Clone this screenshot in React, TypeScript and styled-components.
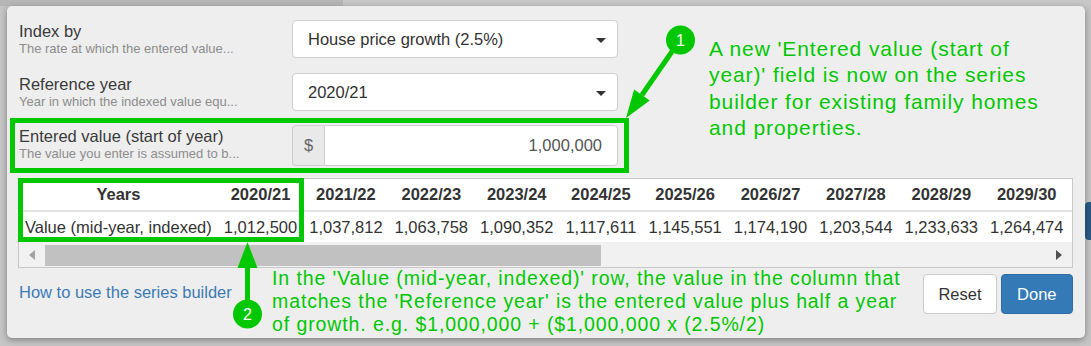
import React from "react";
import styled, { createGlobalStyle } from "styled-components";

const GlobalStyle = createGlobalStyle`
  html, body {
    margin: 0;
    padding: 0;
    width: 1091px;
    height: 346px;
    overflow: hidden;
    background: #c5c5c5;
    font-family: "Liberation Sans", Arial, sans-serif;
  }
`;

const GREEN = "#00c800";

const Page = styled.div`
  position: relative;
  width: 1091px;
  height: 346px;
  overflow: hidden;
  background: #c5c5c5;
`;

const PageTopBar = styled.div`
  display: flex;
  height: 6px;
`;

const TopSegment = styled.div<{ $w: number; $c: string }>`
  width: ${(p) => p.$w}px;
  flex: ${(p) => (p.$w ? "none" : "1")};
  background: ${(p) => p.$c};
`;

const PageBehind = styled.div`
  display: flex;
  flex-direction: column;
  align-items: flex-end;
  padding-top: 196px;
`;

const GhostButton = styled.div`
  width: 6px;
  height: 38px;
  background: #2a5985;
  border-radius: 4px 0 0 4px;
`;

const Modal = styled.div`
  position: absolute;
  left: 7px;
  top: 6px;
  width: 1078px;
  height: 332px;
  box-sizing: border-box;
  padding: 14px 12px 0 11px;
  background: #eeeeee;
  border-radius: 5px;
  box-shadow: 0 2px 6px rgba(0, 0, 0, 0.35);
  color: #333;
`;

const Form = styled.div`
  display: grid;
  grid-template-columns: 261px 326px;
  column-gap: 12px;
  margin-left: 1px;
`;

const FieldRow = styled.div<{ $gap: number }>`
  display: contents;
  & > * {
    margin-bottom: ${(p) => p.$gap}px;
  }
`;

const LabelBlock = styled.div`
  padding-top: 1px;
  white-space: nowrap;
`;

const Label = styled.div`
  font-size: 16.5px;
  line-height: 20px;
  color: #3a3a3a;
`;

const Hint = styled.div`
  font-size: 13px;
  line-height: 16px;
  color: #8c8c8c;
`;

const Select = styled.div`
  box-sizing: border-box;
  height: 38px;
  display: flex;
  align-items: center;
  justify-content: space-between;
  padding: 0 11px 0 15px;
  background: #fff;
  border: 1px solid #cfcfcf;
  border-radius: 4px;
  font-size: 16.5px;
  color: #333;
`;

const Caret = styled.span`
  width: 0;
  height: 0;
  border-top: 5px solid #333;
  border-left: 5px solid transparent;
  border-right: 5px solid transparent;
  margin-top: 2px;
`;

const InputGroup = styled.div`
  display: flex;
  height: 41px;
  box-sizing: border-box;
`;

const Addon = styled.div`
  width: 32px;
  box-sizing: border-box;
  display: flex;
  align-items: center;
  justify-content: center;
  background: #e9e9e9;
  border: 1px solid #cfcfcf;
  border-right: none;
  border-radius: 4px 0 0 4px;
  font-size: 16.5px;
  color: #666;
`;

const Input = styled.div`
  flex: 1;
  display: flex;
  align-items: center;
  justify-content: flex-end;
  padding-right: 15px;
  background: #fff;
  border: 1px solid #cfcfcf;
  border-radius: 0 4px 4px 0;
  font-size: 16.5px;
  color: #555;
`;

const TableBox = styled.div`
  margin-top: -3px;
  border: 1px solid #c8c8c8;
  background: #f1f1f1;
  overflow: hidden;
`;

const Table = styled.table`
  border-collapse: collapse;
  background: #fff;
  white-space: nowrap;
  font-size: 16.5px;
  line-height: 20px;
  color: #333;
`;

const Th = styled.th`
  padding: 5px 6px 6px;
  text-align: center;
  font-weight: bold;
  border-bottom: 2px solid #e2e2e2;
`;

const Td = styled.td`
  padding: 5px 6px;
  text-align: center;
`;

const ScrollTrack = styled.div`
  display: flex;
  align-items: center;
  height: 25px;
  background: #f1f1f1;
`;

const ScrollArrow = styled.div<{ $dir: "left" | "right"; $active?: boolean }>`
  width: 26px;
  display: flex;
  justify-content: center;
  &::before {
    content: "";
    width: 0;
    height: 0;
    border-top: 5px solid transparent;
    border-bottom: 5px solid transparent;
    ${(p) =>
      p.$dir === "left"
        ? `border-right: 6px solid ${p.$active ? "#505050" : "#a3a3a3"};`
        : `border-left: 6px solid ${p.$active ? "#505050" : "#a3a3a3"};`}
  }
`;

const ScrollThumbArea = styled.div`
  flex: 1;
  height: 21px;
  margin-top: 3px;
  align-self: flex-start;
`;

const ScrollThumb = styled.div`
  height: 100%;
  background: #c1c1c1;
`;

const Footer = styled.div`
  display: flex;
  justify-content: space-between;
  align-items: flex-start;
  margin-top: 6px;
  margin-left: 1px;
`;

const HelpLink = styled.a`
  margin-top: 8px;
  font-size: 16.5px;
  line-height: 20px;
  color: #3d7ab6;
  text-decoration: none;
`;

const Buttons = styled.div`
  display: flex;
  gap: 4px;
`;

const Button = styled.button<{ $primary?: boolean }>`
  height: 40px;
  box-sizing: border-box;
  padding: 0 ${(p) => (p.$primary ? "15.5px" : "14px")};
  font-family: inherit;
  font-size: 16.5px;
  border-radius: 4px;
  border: 1px solid ${(p) => (p.$primary ? "#2e6da4" : "#cccccc")};
  background: ${(p) => (p.$primary ? "#337ab7" : "#ffffff")};
  color: ${(p) => (p.$primary ? "#ffffff" : "#333333")};
`;

const Overlay = styled.svg`
  position: absolute;
  left: 0;
  top: 0;
  pointer-events: none;
`;

const Note = styled.div<{ $x: number; $y: number; $size: number; $lh: number; $ls: number }>`
  position: absolute;
  left: ${(p) => p.$x}px;
  top: ${(p) => p.$y}px;
  font-size: ${(p) => p.$size}px;
  line-height: ${(p) => p.$lh}px;
  letter-spacing: ${(p) => p.$ls}px;
  color: ${GREEN};
  white-space: nowrap;
`;

const known = [
  1012500, 1037812, 1063758, 1090352, 1117611, 1145551, 1174190, 1203544,
  1233633, 1264474,
];

const years = Array.from({ length: 11 }, (_, i) => {
  const y = 2020 + i;
  return `${y}/${String((y + 1) % 100).padStart(2, "0")}`;
});

const values = years.map((_, i) =>
  (known[i] ?? Math.round(1012500 * Math.pow(1.025, i))).toLocaleString("en-US")
);

function Field(props: { label: string; hint: string; gap: number; children: React.ReactNode }) {
  return (
    <FieldRow $gap={props.gap}>
      <LabelBlock>
        <Label>{props.label}</Label>
        <Hint>{props.hint}</Hint>
      </LabelBlock>
      {props.children}
    </FieldRow>
  );
}

function Annotations() {
  // arrow 1 runs from the badge down-left to the highlight's corner
  const tip1 = { x: 626, y: 118 };
  const ux = -0.569;
  const uy = 0.822;
  const base1 = { x: tip1.x - ux * 28, y: tip1.y - uy * 28 };
  const px = 0.822;
  const py = 0.569;
  return (
    <Overlay width={1091} height={346} viewBox="0 0 1091 346">
      <rect x={12.5} y={120.5} width={614} height={50} fill="none" stroke={GREEN} strokeWidth={5} />
      <rect x={20.5} y={180.5} width={281} height={59} fill="none" stroke={GREEN} strokeWidth={5} />
      <line x1={680} y1={40} x2={base1.x} y2={base1.y} stroke={GREEN} strokeWidth={5} />
      <polygon
        points={`${tip1.x},${tip1.y} ${base1.x + px * 9.5},${base1.y + py * 9.5} ${base1.x - px * 9.5},${base1.y - py * 9.5}`}
        fill={GREEN}
      />
      <circle cx={680.5} cy={40} r={14.5} fill={GREEN} />
      <text x={680.5} y={46} textAnchor="middle" fontSize={16} fill="#fff" fontFamily="Liberation Sans, Arial, sans-serif">
        1
      </text>
      <line x1={247.5} y1={266} x2={247.5} y2={305} stroke={GREEN} strokeWidth={5} />
      <polygon points="247.5,242 237.5,268 257.5,268" fill={GREEN} />
      <circle cx={247.5} cy={314} r={14.5} fill={GREEN} />
      <text x={247.5} y={320} textAnchor="middle" fontSize={16} fill="#fff" fontFamily="Liberation Sans, Arial, sans-serif">
        2
      </text>
    </Overlay>
  );
}

export default function App() {
  return (
    <Page>
      <GlobalStyle />
      <PageTopBar>
        <TopSegment $w={343} $c="#b6b6b6" />
        <TopSegment $w={0} $c="#c7c7c7" />
      </PageTopBar>
      <PageBehind>
        <GhostButton />
      </PageBehind>

      <Modal>
        <Form>
          <Field label="Index by" hint="The rate at which the entered value..." gap={15}>
            <Select>
              House price growth (2.5%)
              <Caret />
            </Select>
          </Field>
          <Field label="Reference year" hint="Year in which the indexed value equ..." gap={14}>
            <Select>
              2020/21
              <Caret />
            </Select>
          </Field>
          <Field label="Entered value (start of year)" hint="The value you enter is assumed to b..." gap={15}>
            <InputGroup>
              <Addon>$</Addon>
              <Input>1,000,000</Input>
            </InputGroup>
          </Field>
        </Form>

        <TableBox>
          <Table>
            <thead>
              <tr>
                <Th>Years</Th>
                {years.map((y) => (
                  <Th key={y}>{y}</Th>
                ))}
              </tr>
            </thead>
            <tbody>
              <tr>
                <Td>Value (mid-year, indexed)</Td>
                {values.map((v, i) => (
                  <Td key={i}>{v}</Td>
                ))}
              </tr>
            </tbody>
          </Table>
          <ScrollTrack>
            <ScrollArrow $dir="left" />
            <ScrollThumbArea>
              <ScrollThumb style={{ width: "55.5%" }} />
            </ScrollThumbArea>
            <ScrollArrow $dir="right" $active />
          </ScrollTrack>
        </TableBox>

        <Footer>
          <HelpLink href="#">How to use the series builder</HelpLink>
          <Buttons>
            <Button>Reset</Button>
            <Button $primary>Done</Button>
          </Buttons>
        </Footer>
      </Modal>

      <Annotations />
      <Note $x={709} $y={35.5} $size={21} $lh={26.5} $ls={0.9}>
        A new 'Entered value (start of
        <br />
        year)' field is now on the series
        <br />
        builder for existing family homes
        <br />
        and properties.
      </Note>
      <Note $x={272} $y={267} $size={19.5} $lh={23} $ls={0.9}>
        In the 'Value (mid-year, indexed)' row, the value in the column that
        <br />
        matches the 'Reference year' is the entered value plus half a year
        <br />
        of growth. e.g. $1,000,000 + ($1,000,000 x (2.5%/2)
      </Note>
    </Page>
  );
}
